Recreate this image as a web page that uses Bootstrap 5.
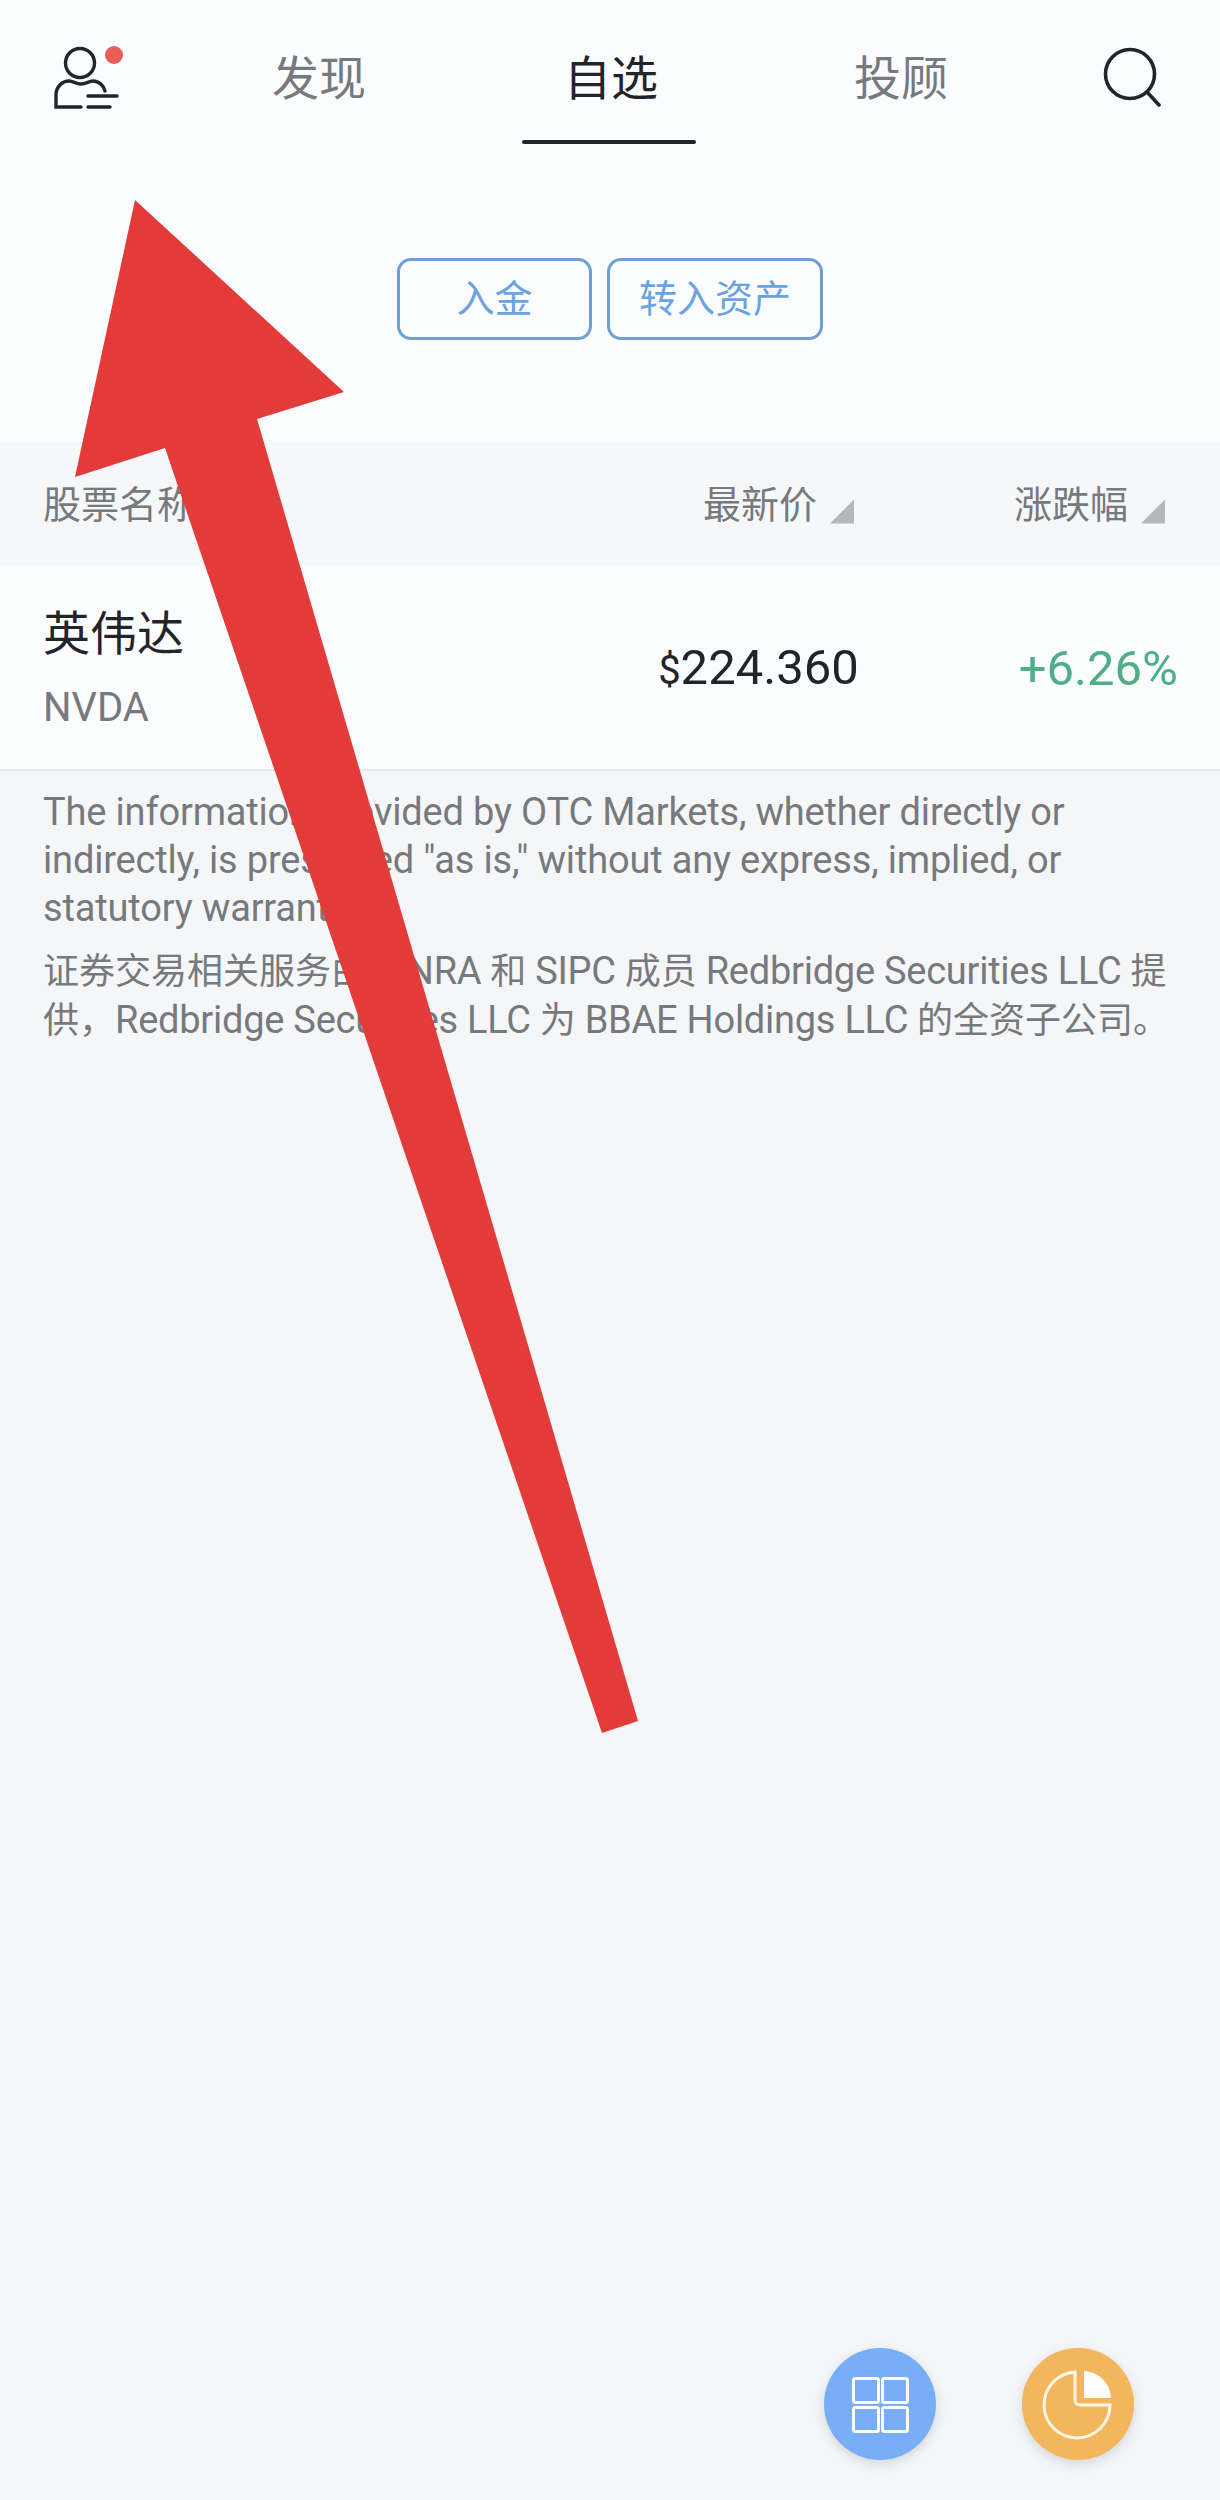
<!DOCTYPE html>
<html lang="zh-CN">
<head>
  <meta charset="UTF-8" />
  <meta name="viewport" content="width=device-width, initial-scale=1" />
  <title>自选</title>
  <link href="https://cdn.jsdelivr.net/npm/bootstrap@5.3.0/dist/css/bootstrap.min.css" rel="stylesheet" />
  <style>
    body {
      background: #f5f6f8;
      font-family: Roboto, "Noto Sans CJK SC", sans-serif;
      color: #222429;
    }
    .app-screen {
      position: relative;
      height: 2500px;
      overflow: hidden;
    }
    .top-area {
      background: #fbfcfe;
      height: 443px;
    }
    .top-nav {
      height: 144px;
    }
    .user-icon {
      width: 80px;
      height: 80px;
      margin: 32px 0 0 48px;
    }
    .nav-tab {
      width: 174px;
      height: 144px;
      padding-top: 45px;
      font-size: 47px;
      line-height: 68px;
      text-align: center;
      color: #77797c;
    }
    .tab-first { margin-left: 104px; }
    .tab-second { margin-left: 116px; padding-left: 4px; }
    .tab-third { margin-left: 118px; }
    .nav-tab.is-active {
      color: #222429;
      position: relative;
    }
    .nav-tab.is-active::after {
      content: "";
      position: absolute;
      left: 0;
      right: 0;
      bottom: 0;
      height: 4px;
      border-radius: 2px;
      background: #222429;
    }
    .search-icon {
      width: 60px;
      height: 60px;
      margin: 47px 0 0 115px;
    }
    .fund-btn {
      height: 82px;
      border: 3px solid #6e9fd6;
      border-radius: 14px;
      background: transparent;
      color: #6ba3e2;
      font-size: 38px;
      line-height: 72px;
      padding: 0;
      text-align: center;
    }
    .fund-btn:hover { color: #6ba3e2; border-color: #6e9fd6; }
    .btn-deposit { width: 195px; }
    .btn-transfer { width: 216px; }
    .fund-row {
      margin-top: 114px;
      padding-left: 397px;
      gap: 15px;
    }
    .list-head {
      height: 122px;
      background: #f6f7f9;
      padding: 3px 55px 0 43px;
      font-size: 38px;
      color: #77797c;
    }
    .sort-mark {
      width: 24px;
      height: 24px;
      margin: 12px 0 0 13px;
      background: #b5b7ba;
      clip-path: polygon(100% 0, 100% 100%, 0 100%);
    }
    .head-price { margin-left: auto; }
    .head-change { margin-left: 160px; }
    .stock-row {
      height: 206px;
      background: #fbfcfe;
      border-bottom: 2px solid #e6e7e9;
      padding: 0 42px 0 43px;
    }
    .stock-name {
      font-size: 47px;
      line-height: 68px;
      margin-top: 35px;
    }
    .stock-code {
      font-size: 40px;
      line-height: 56px;
      margin-top: 12px;
      color: #77797c;
    }
    .stock-price {
      font-size: 49px;
      margin-left: auto;
      line-height: 60px;
      margin-top: 4px;
    }
    .stock-price small {
      font-size: 40px;
    }
    .stock-change {
      font-size: 49px;
      line-height: 60px;
      color: #4fae85;
      margin-left: 160px;
      margin-top: 4px;
    }
    .disclaimer {
      padding: 17px 30px 0 43px;
      line-height: 48px;
      color: #77797c;
    }
    .disclaimer p { margin: 0 0 15px; }
    .disclaimer-en {
      font-size: 38px;
      letter-spacing: -0.17px;
    }
    .disclaimer-zh { font-size: 36px; }
    .disclaimer-zh span {
      font-size: 38px;
      letter-spacing: -0.25px;
    }
    .float-btn {
      position: absolute;
      top: 2348px;
      width: 112px;
      height: 112px;
      border-radius: 50%;
      box-shadow: 0 4px 12px rgba(60, 70, 90, 0.18);
    }
    .float-apps { left: 824px; background: #78aef7; }
    .float-pie { left: 1022px; background: #f4b65c; }
    .float-btn svg { width: 112px; height: 112px; display: block; }
    .arrow-mark {
      position: absolute;
      left: 0;
      top: 0;
      pointer-events: none;
    }
  </style>
</head>
<body>
  <div class="app-screen">
    <div class="top-area">
      <div class="top-nav d-flex align-items-start">
        <svg class="user-icon flex-shrink-0" viewBox="48 32 80 80" fill="none" stroke="#222429" stroke-width="3.4" stroke-linecap="round">
          <circle cx="80" cy="63" r="14.5"/>
          <path d="M81 107H56V95C56 87 62 81 69 81C73 81 76 84 81 84C86 84 89 81 93 81C99 81 104 86 105 91"/>
          <path d="M88 96H117M88 107H110"/>
          <circle cx="114" cy="55" r="9" fill="#e85d55" stroke="none"/>
        </svg>
        <div class="nav-tab tab-first">发现</div>
        <div class="nav-tab tab-second is-active">自选</div>
        <div class="nav-tab tab-third">投顾</div>
        <svg class="search-icon flex-shrink-0" viewBox="0 0 60 60" fill="none" stroke="#222429" stroke-width="3.6" stroke-linecap="round">
          <circle cx="27" cy="27" r="24.5"/>
          <path d="M44 45L56 58"/>
        </svg>
      </div>
      <div class="fund-row d-flex">
        <button type="button" class="btn fund-btn btn-deposit">入金</button>
        <button type="button" class="btn fund-btn btn-transfer">转入资产</button>
      </div>
    </div>

    <div class="list-head d-flex align-items-center">
      <span>股票名称</span>
      <span class="head-price">最新价</span>
      <span class="sort-mark"></span>
      <span class="head-change">涨跌幅</span>
      <span class="sort-mark"></span>
    </div>

    <div class="stock-row d-flex align-items-center">
      <div class="align-self-start">
        <div class="stock-name">英伟达</div>
        <div class="stock-code">NVDA</div>
      </div>
      <div class="stock-price"><small>$</small>224.360</div>
      <div class="stock-change">+6.26%</div>
    </div>

    <div class="disclaimer">
      <p class="disclaimer-en">The information provided by OTC Markets, whether directly or indirectly, is presented "as is," without any express, implied, or statutory warranty.</p>
      <p class="disclaimer-zh">证券交易相关服务由 <span>FINRA</span> 和 <span>SIPC</span> 成员 <span>Redbridge Securities LLC</span> 提供，<span>Redbridge Securities LLC</span> 为 <span>BBAE Holdings LLC</span> 的全资子公司。</p>
    </div>

    <div class="float-btn float-apps">
      <svg viewBox="0 0 112 112" fill="none" stroke="#fff" stroke-width="3">
        <rect x="29.5" y="30.5" width="25" height="24" rx="2"/>
        <rect x="58.5" y="30.5" width="25" height="24" rx="2"/>
        <rect x="29.5" y="59.5" width="25" height="24" rx="2"/>
        <rect x="58.5" y="59.5" width="25" height="24" rx="2"/>
      </svg>
    </div>
    <div class="float-btn float-pie">
      <svg viewBox="0 0 112 112" fill="none" stroke="#fff" stroke-width="3">
        <path d="M53 24V52C53 55 55 57 58 57H88A33 33 0 1 1 53 24Z" stroke="#fff8e6"/>
        <path d="M62 23A28 28 0 0 1 89 50H62Z" fill="#fff" stroke="none"/>
      </svg>
    </div>

    <svg class="arrow-mark" width="1220" height="2500" viewBox="0 0 1220 2500">
      <polygon points="135,200 344,392 257,419 638,1721 602,1733 165,448 75,477" fill="#e33b3a"/>
    </svg>
  </div>

  <script src="https://cdn.jsdelivr.net/npm/bootstrap@5.3.0/dist/js/bootstrap.bundle.min.js"></script>
</body>
</html>
